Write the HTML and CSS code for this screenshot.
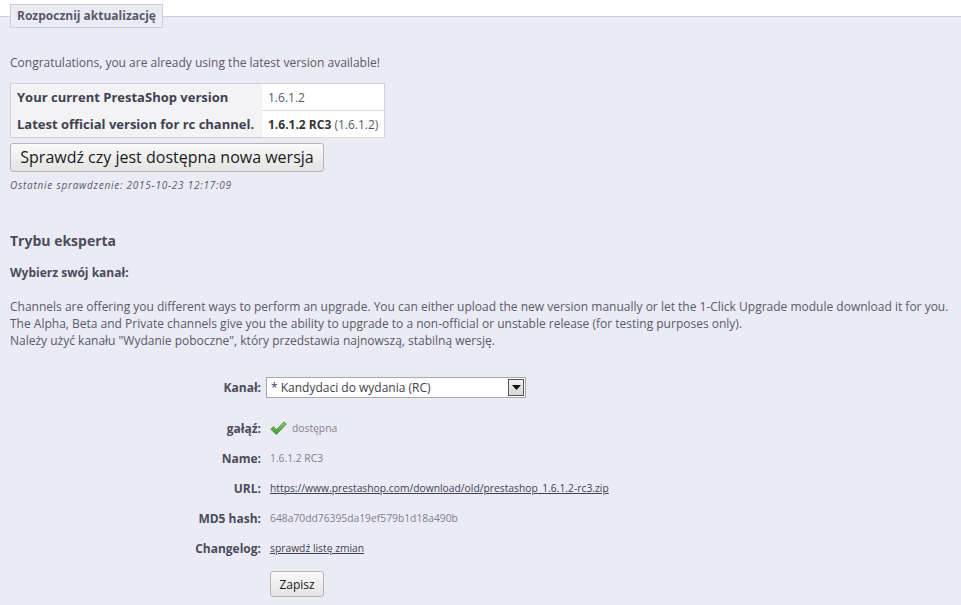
FILE: index.html
```html
<!DOCTYPE html>
<html>
<head>
<meta charset="utf-8">
<link rel="stylesheet" href="styles.css">
</head>
<body>
<fieldset class="panel">
  <legend class="legend">Rozpocznij aktualizację</legend>
  <p class="congrats">Congratulations, you are already using the latest version available!</p>
  <table class="versions">
    <tr><th>Your current PrestaShop version</th><td>1.6.1.2</td></tr>
    <tr><th>Latest official version for rc channel.</th><td><b>1.6.1.2 RC3</b> (1.6.1.2)</td></tr>
  </table>
  <button class="btn btn-big">Sprawdź czy jest dostępna nowa wersja</button>
  <p class="lastcheck">Ostatnie sprawdzenie: 2015-10-23 12:17:09</p>

  <h2 class="expert">Trybu eksperta</h2>
  <h3 class="choose">Wybierz swój kanał:</h3>
  <p class="desc">Channels are offering you different ways to perform an upgrade. You can either upload the new version manually or let the 1-Click Upgrade module download it for you.<br>The Alpha, Beta and Private channels give you the ability to upgrade to a non-official or unstable release (for testing purposes only).<br>Należy użyć kanału "Wydanie poboczne", który przedstawia najnowszą, stabilną wersję.</p>

  <div class="form">
    <div class="row row-select">
      <label class="lbl">Kanał:</label>
      <div class="select"><span class="select-text">* Kandydaci do wydania (RC)</span><span class="select-arrow"><svg width="9" height="5" viewBox="0 0 9 5"><path d="M0 0H9L4.5 5Z" fill="#111"/></svg></span></div>
    </div>
    <div class="row">
      <label class="lbl">gałąź:</label>
      <div class="val"><svg class="check" width="17" height="15" viewBox="0 0 17 15"><defs><linearGradient id="g" x1="0" y1="0" x2="0" y2="1"><stop offset="0" stop-color="#8fd16b"/><stop offset="1" stop-color="#3e9a2c"/></linearGradient></defs><path d="M0.8 8.2 L3.4 5.8 L6.4 8.6 L14.2 0.9 L16.3 3.2 L6.4 13.4 Z" fill="url(#g)" stroke="#3b8a2a" stroke-width="0.8" stroke-linejoin="round"/></svg><span class="muted">dostępna</span></div>
    </div>
    <div class="row">
      <label class="lbl">Name:</label>
      <div class="val muted">1.6.1.2 RC3</div>
    </div>
    <div class="row">
      <label class="lbl">URL:</label>
      <div class="val"><a class="link" href="#">https://www.prestashop.com/download/old/prestashop_1.6.1.2-rc3.zip</a></div>
    </div>
    <div class="row">
      <label class="lbl">MD5 hash:</label>
      <div class="val muted">648a70dd76395da19ef579b1d18a490b</div>
    </div>
    <div class="row">
      <label class="lbl">Changelog:</label>
      <div class="val"><a class="link" href="#">sprawdź listę zmian</a></div>
    </div>
    <div class="row row-btn">
      <span></span>
      <div class="val"><button class="btn btn-small">Zapisz</button></div>
    </div>
  </div>
</fieldset>
</body>
</html>
```

FILE: styles.css
```css
html, body {
  margin: 0;
  padding: 0;
  background: #ffffff;
  font-family: "Open Sans", "DejaVu Sans", sans-serif;
  color: #585a69;
  font-size: 12px;
}

.panel {
  margin: 4px 0 0 0;
  padding: 0 10px 40px 10px;
  border: 0;
  border-top: 1px solid #ccced7;
  background: #ebebf5;
  min-height: 620px;
}

.legend {
  padding: 3px 6px;
  margin: 0;
  border: 1px solid #ccced7;
  background: #ebebf5;
  font-weight: bold;
  font-size: 12px;
  line-height: 16px;
  white-space: nowrap;
  color: #585a69;
}

.congrats {
  margin: 26px 0 12px 0;
  line-height: 17px;
}

.versions {
  border-collapse: collapse;
  border: 1px solid #cfd0d8;
}
.versions th {
  background: #f3f3f5;
  text-align: left;
  font-weight: bold;
  font-size: 13px;
  padding: 0 6px;
  height: 26px;
  width: 239px;
  white-space: nowrap;
  color: #3f4150;
}
.versions td {
  background: #ffffff;
  padding: 0 6px;
  height: 26px;
  width: 109px;
  white-space: nowrap;
  border-bottom: 1px solid #dcdce0;
  color: #585a69;
}
.versions td b { color: #333; }

.btn {
  font-family: "Open Sans", "DejaVu Sans", sans-serif;
  border: 1px solid #b5b5b5;
  border-radius: 3px;
  background: linear-gradient(#fafafa, #e4e4e4);
  color: #1a1a1a;
  padding: 0;
  cursor: pointer;
}
.btn-big {
  display: block;
  margin-top: 5px;
  width: 314px;
  height: 29px;
  font-size: 16px;
  line-height: 27px;
}
.btn-small {
  width: 54px;
  height: 26px;
  font-size: 12px;
}

.lastcheck {
  margin: 6px 0 0 0;
  font-size: 10px;
  font-style: italic;
  letter-spacing: 0.75px;
  color: #585a69;
  line-height: 14px;
}

.expert {
  margin: 39px 0 0 0;
  font-size: 14px;
  line-height: 20px;
  font-weight: bold;
  color: #4a4c5b;
}

.choose {
  margin: 13px 0 0 0;
  font-size: 12px;
  line-height: 17px;
  font-weight: bold;
  color: #4a4c5b;
}

.desc {
  margin: 17px 0 0 0;
  line-height: 17px;
}

.form {
  margin-top: 28px;
}
.row {
  display: grid;
  grid-template-columns: 251px 1fr;
  column-gap: 5px;
  align-items: center;
  height: 30px;
}
.row-select {
  height: 21px;
  margin-bottom: 15px;
}
.row-btn {
  height: 30px;
  margin-top: 6px;
}
.lbl {
  text-align: right;
  font-weight: bold;
  color: #4a4c5b;
}
.val {
  padding-left: 4px;
  display: flex;
  align-items: center;
}
.muted {
  font-size: 10.3px;
  color: #7f808a;
}
.link {
  font-size: 10.3px;
  color: #3f4150;
  text-decoration: underline;
}
.check {
  margin-right: 5px;
}

.select {
  width: 258px;
  height: 19px;
  border: 1px solid #a8a8b0;
  background: #ffffff;
  display: flex;
  align-items: center;
  justify-content: space-between;
}
.select-text {
  padding-left: 4px;
  color: #3f4150;
}
.select-arrow {
  width: 14px;
  height: 15px;
  margin-right: 1px;
  border: 1px solid #555;
  background: linear-gradient(#f4f4f4, #d6d6d6);
  display: flex;
  align-items: center;
  justify-content: center;
}
```
